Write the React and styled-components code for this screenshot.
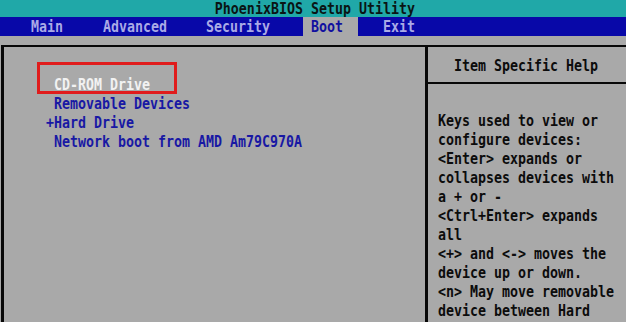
import React from 'react';
import styled, { createGlobalStyle } from 'styled-components';

const GlobalStyle = createGlobalStyle`
  html, body {
    margin: 0;
    padding: 0;
    background: #a9a9a9;
    overflow: hidden;
  }
`;

const Screen = styled.div`
  width: 626px;
  height: 322px;
  background: #a9a9a9;
  font-family: 'DejaVu Sans Mono', 'Liberation Mono', monospace;
  font-weight: bold;
  font-size: 15px;
  display: flex;
  flex-direction: column;
  overflow: hidden;
`;

// VGA glyphs are tall and narrow: squeeze a 15px mono font to 8px cells
const Glyphs = styled.span`
  display: inline-block;
  white-space: pre;
  transform: scaleX(0.886);
  transform-origin: ${(p) => p.$origin || 'left'} center;
`;

const TitleBar = styled.div`
  height: 17px;
  box-sizing: border-box;
  padding: 2px 0 0 4px;
  line-height: 15px;
  background: #20a8a8;
  color: #0a1414;
  text-align: center;
`;

const MenuBar = styled.div`
  height: 19px;
  background: #0808a8;
  display: flex;
`;

const MenuItem = styled.div`
  width: ${(p) => p.$w}px;
  height: 19px;
  margin-left: ${(p) => p.$gap}px;
  padding: 2px 0 0 8px;
  line-height: 17px;
  box-sizing: border-box;
  color: ${(p) => (p.$active ? '#1010a0' : '#aaaae6')};
  background: ${(p) => (p.$active ? '#a9a9a9' : 'transparent')};
`;

const Body = styled.div`
  flex: 1;
  padding: 9px 0 0 1px;
  display: flex;
`;

const Frame = styled.div`
  flex: 1;
  border-top: 2px solid #080808;
  border-left: 3px solid #080808;
  display: grid;
  grid-template-columns: 424px 1fr;
`;

const BootList = styled.div`
  position: relative;
  padding: 29px 0 0 42px;
  line-height: 19px;
  border-right: 3px solid #080808;
`;

const BootItem = styled.div`
  color: ${(p) => (p.$selected ? '#f2f2f2' : '#1818a4')};
`;

const Highlight = styled.div`
  position: absolute;
  left: 33px;
  top: 15px;
  width: 140px;
  height: 32px;
  box-sizing: border-box;
  border: 3px solid #e01c1c;
`;

const HelpPanel = styled.div`
  display: flex;
  flex-direction: column;
  color: #0c0c0c;
`;

const HelpHeader = styled.div`
  height: 37px;
  box-sizing: border-box;
  padding: 2px 0 0 26px;
  line-height: 35px;
  border-bottom: 2px solid #080808;
`;

const HelpBody = styled.div`
  padding: 28px 0 0 10px;
  line-height: 19px;
`;

const menu = [
  { label: 'Main', gap: 23, w: 48 },
  { label: 'Advanced', gap: 24, w: 80 },
  { label: 'Security', gap: 23, w: 80 },
  { label: 'Boot', gap: 25, w: 55, active: true },
  { label: 'Exit', gap: 17, w: 48 },
];

const bootOrder = [
  { label: ' CD-ROM Drive', selected: true },
  { label: ' Removable Devices' },
  { label: '+Hard Drive' },
  { label: ' Network boot from AMD Am79C970A' },
];

const helpLines = [
  'Keys used to view or',
  'configure devices:',
  '<Enter> expands or',
  'collapses devices with',
  'a + or -',
  '<Ctrl+Enter> expands',
  'all',
  '<+> and <-> moves the',
  'device up or down.',
  '<n> May move removable',
  'device between Hard',
];

export default function App() {
  return (
    <Screen>
      <GlobalStyle />
      <TitleBar>
        <Glyphs $origin="center">PhoenixBIOS Setup Utility</Glyphs>
      </TitleBar>
      <MenuBar>
        {menu.map((m) => (
          <MenuItem key={m.label} $gap={m.gap} $w={m.w} $active={m.active}>
            <Glyphs>{m.label}</Glyphs>
          </MenuItem>
        ))}
      </MenuBar>
      <Body>
        <Frame>
          <BootList>
            <Highlight />
            {bootOrder.map((b) => (
              <BootItem key={b.label} $selected={b.selected}>
                <Glyphs>{b.label}</Glyphs>
              </BootItem>
            ))}
          </BootList>
          <HelpPanel>
            <HelpHeader>
              <Glyphs>Item Specific Help</Glyphs>
            </HelpHeader>
            <HelpBody>
              {helpLines.map((l) => (
                <div key={l}>
                  <Glyphs>{l}</Glyphs>
                </div>
              ))}
            </HelpBody>
          </HelpPanel>
        </Frame>
      </Body>
    </Screen>
  );
}
